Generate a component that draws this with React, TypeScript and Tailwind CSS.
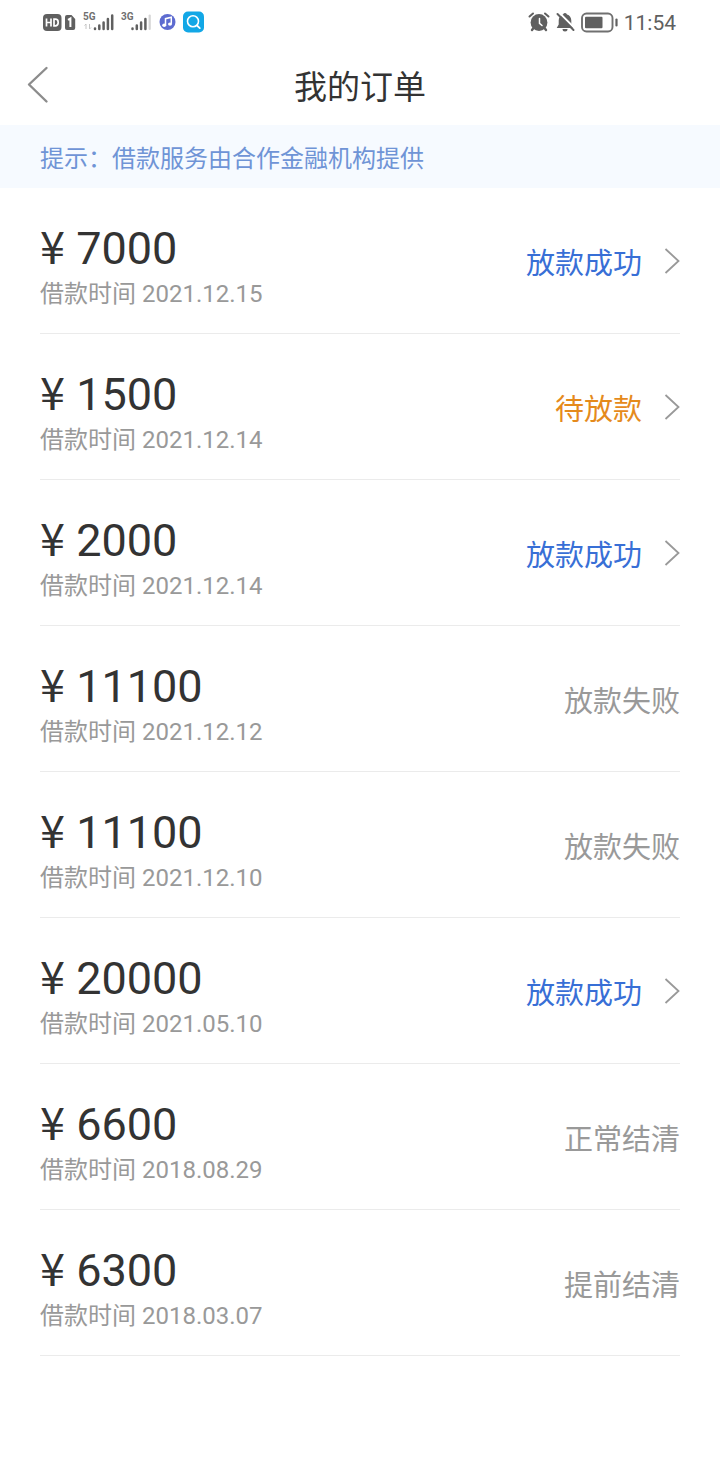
type Tone = 'success' | 'pending' | 'closed';

interface Order {
  amount: string;
  date: string;
  status: string;
  tone: Tone;
}

const orders: Order[] = [
  { amount: '7000', date: '2021.12.15', status: '放款成功', tone: 'success' },
  { amount: '1500', date: '2021.12.14', status: '待放款', tone: 'pending' },
  { amount: '2000', date: '2021.12.14', status: '放款成功', tone: 'success' },
  { amount: '11100', date: '2021.12.12', status: '放款失败', tone: 'closed' },
  { amount: '11100', date: '2021.12.10', status: '放款失败', tone: 'closed' },
  { amount: '20000', date: '2021.05.10', status: '放款成功', tone: 'success' },
  { amount: '6600', date: '2018.08.29', status: '正常结清', tone: 'closed' },
  { amount: '6300', date: '2018.03.07', status: '提前结清', tone: 'closed' },
];

const toneClass: Record<Tone, string> = {
  success: 'text-[#386fd6]',
  pending: 'text-[#e58a1c]',
  closed: 'text-[#999999]',
};

function NetworkIcons() {
  return (
    <svg width="164" height="24" viewBox="0 0 164 24" aria-hidden="true">
      {/* HD badge */}
      <rect x="1" y="3" width="18.5" height="17" rx="4" fill="#606060" />
      <path d="M4.5 7.500v8M9 7.500v8M4.5 11.500H9M12 8.200v6.600h1.300c1.900 0 2.900-1.300 2.900-3.300s-1-3.300-2.900-3.300z" fill="none" stroke="#fff" strokeWidth="1.7" />
      {/* SIM card */}
      <path d="M25 4h4.500l3.700 4v9a2 2 0 0 1-2 2H25a2 2 0 0 1-2-2V6a2 2 0 0 1 2-2z" fill="#606060" />
      <path d="M26 8.800l2.400-1.300V16" fill="none" stroke="#fff" strokeWidth="2" />
      <text x="41" y="9" fontSize="10" fontWeight="700" className="fill-[#707070] font-['Roboto',sans-serif]">5G</text>
      <path d="M44 13v5M42.500 14.500L44 13M47.500 13v5M47.500 18l1.500-1.500" fill="none" stroke="#c4c4c4" strokeWidth="1" />
      <path d="M53 17.500v.5M57.300 14.500v3.500M61.600 11.500v6.500M65.900 8v10M70.200 4.500V18" fill="none" stroke="#606060" strokeWidth="2.5" strokeLinecap="round" />
      <text x="79" y="9" fontSize="10" fontWeight="700" className="fill-[#707070] font-['Roboto',sans-serif]">3G</text>
      <path d="M90.500 17.500v.5M94.800 14.500v3.500M99.100 11.500v6.500M103.400 8v10" fill="none" stroke="#606060" strokeWidth="2.5" strokeLinecap="round" />
      <path d="M107.700 4.500V18" stroke="#d6d6d6" strokeWidth="2.2" strokeLinecap="round" />
      {/* Music app */}
      <circle cx="125.5" cy="11" r="8" fill="#5d6bd0" />
      <path d="M123.500 14V7.700l5.800-1.400v6.400" fill="none" stroke="#fff" strokeWidth="1.5" />
      <ellipse cx="122.2" cy="14.3" rx="2" ry="1.7" fill="#fff" />
      <ellipse cx="128" cy="13.1" rx="2" ry="1.7" fill="#fff" />
      {/* Search app */}
      <rect x="141" y="0.5" width="21" height="21" rx="5" fill="#12a7e6" />
      <circle cx="151" cy="10.3" r="5.5" fill="none" stroke="#fff" strokeWidth="1.6" />
      <path d="M155 14.500l2.800 2.600" stroke="#fff" strokeWidth="1.8" strokeLinecap="round" />
    </svg>
  );
}

function DeviceIcons() {
  return (
    <svg width="92" height="24" viewBox="0 0 92 24" aria-hidden="true">
      {/* Alarm clock */}
      <circle cx="11" cy="11.5" r="8.4" fill="#606060" />
      <path d="M1.500 5.500l3.500-3M20.500 5.500l-3.500-3" stroke="#606060" strokeWidth="2" strokeLinecap="round" />
      <path d="M5.500 17l-1.500 2M16.500 17l1.500 2" stroke="#606060" strokeWidth="2.4" strokeLinecap="round" />
      <path d="M11.500 7.500v4.800l2.500 2.200" fill="none" stroke="#fff" strokeWidth="1.5" strokeLinecap="round" />
      {/* Muted bell */}
      <path d="M37 2a2 2 0 0 1 2 1.500c2.700.8 4.300 3 4.300 6v4l2 3.500H28.700l2-3.500v-4c0-3 1.600-5.200 4.300-6A2 2 0 0 1 37 2z" fill="#606060" />
      <path d="M34.500 18h5a2.500 2.500 0 0 1-5 0z" fill="#606060" />
      <path d="M31 1.500l17 17" stroke="#fff" strokeWidth="2" />
      <path d="M29.500 3l16 16" stroke="#606060" strokeWidth="2" strokeLinecap="round" />
      {/* Battery */}
      <rect x="54" y="2.5" width="30.5" height="18" rx="4.5" fill="none" stroke="#707070" strokeWidth="1.9" />
      <rect x="57" y="5.8" width="17.5" height="11.4" rx="1" fill="#606060" />
      <path d="M88.500 8.500v6" stroke="#606060" strokeWidth="2.2" strokeLinecap="round" />
    </svg>
  );
}

function StatusBar() {
  return (
    <div className="flex h-11 items-center justify-between pt-0.5 pr-11 pl-[42px] text-[#606060]">
      <NetworkIcons />
      <div className="flex items-center gap-1">
        <DeviceIcons />
        <span className="text-[21px] leading-6">11:54</span>
      </div>
    </div>
  );
}

function Header() {
  return (
    <header className="grid h-[81px] grid-cols-[1fr_auto_1fr] items-center px-6">
      <button type="button" aria-label="返回" className="justify-self-start">
        <svg width="26" height="40" viewBox="0 0 26 40" fill="none" aria-hidden="true">
          <path d="M22.500 3L5 19.500l17.500 17" stroke="#8c8c8c" strokeWidth="2.4" strokeLinecap="round" strokeLinejoin="round" />
        </svg>
      </button>
      <h1 className="pt-1.5 text-[33px] leading-10 text-[#333333]">我的订单</h1>
    </header>
  );
}

function OrderRow({ order }: { order: Order }) {
  const body = (
    <>
      <span className="flex flex-col pt-3.5">
        <span className="text-[45px] leading-[50px] text-[#333333]">
          <span className="font-['Noto_Sans_CJK_SC',sans-serif] leading-none">¥</span> {order.amount}
        </span>
        <span className="text-2xl leading-10 text-[#999999]">借款时间 {order.date}</span>
      </span>
      <span className={`flex items-center gap-[22px] text-[29px] leading-10 ${toneClass[order.tone]}`}>
        <span className="pt-1.5">{order.status}</span>
        {order.tone !== 'closed' && (
          <svg width="16" height="28" viewBox="0 0 16 28" fill="none" aria-hidden="true">
            <path d="M1.500 2L14.500 14 1.500 26" stroke="#999999" strokeWidth="1.8" />
          </svg>
        )}
      </span>
    </>
  );
  const layout = 'flex min-h-[145px] w-full items-center justify-between text-left';
  return (
    <li className="border-b border-[#ebebeb]">
      {order.tone === 'closed' ? (
        <div className={layout}>{body}</div>
      ) : (
        <button type="button" className={layout}>{body}</button>
      )}
    </li>
  );
}

export default function App() {
  return (
    <div className="min-h-screen bg-white font-['Roboto','Noto_Sans_CJK_SC',sans-serif]" lang="zh-CN">
      <StatusBar />
      <Header />
      <main>
        <p className="bg-[#f6faff] px-10 pt-3.5 pb-[9px] text-2xl leading-10 text-[#6f94d6]">提示：借款服务由合作金融机构提供</p>
        <ul className="px-10">
          {orders.map((order) => (
            <OrderRow key={order.date + order.amount + order.status} order={order} />
          ))}
        </ul>
      </main>
    </div>
  );
}
